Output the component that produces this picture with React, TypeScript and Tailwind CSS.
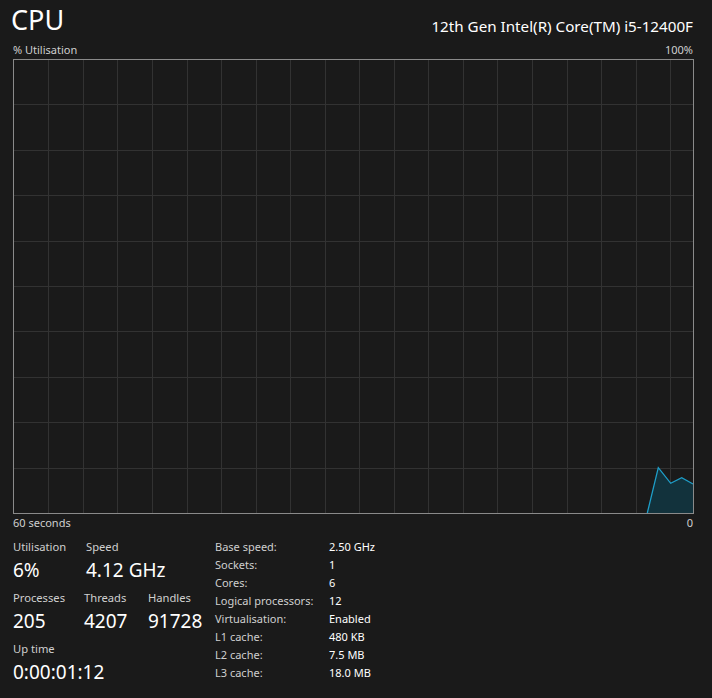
import React from "react";

const W = 680;
const H = 454;

function Graph() {
  const vLines: number[] = [];
  for (let x = 35.3; x < W; x += 34.55) vLines.push(x);
  const hLines: number[] = [];
  for (let i = 1; i < 10; i++) hLines.push((H / 10) * i);
  const pts: [number, number][] = [
    [634.3, H],
    [645.3, 408.7],
    [657.7, 424.3],
    [668.7, 418.7],
    [W, 425],
  ];
  const line = pts.map((p) => p.join(",")).join(" ");
  const area = `${line} ${W},${H}`;
  return (
    <svg width={W + 1} height={H + 1} className="block">
      {vLines.map((x, i) => (
        <line key={"v" + i} x1={x + 0.5} x2={x + 0.5} y1={0} y2={H} stroke="#323232" strokeWidth={1} shapeRendering="crispEdges" />
      ))}
      {hLines.map((y, i) => (
        <line key={"h" + i} x1={0} x2={W} y1={y + 0.5} y2={y + 0.5} stroke="#323232" strokeWidth={1} shapeRendering="crispEdges" />
      ))}
      <polygon points={area} fill="#12323c" />
      <polyline points={line} fill="none" stroke="#1e9ec8" strokeWidth={1.3} />
      <rect x={0.5} y={0.5} width={W} height={H} fill="none" stroke="#8a8a8a" strokeWidth={1} shapeRendering="crispEdges" />
    </svg>
  );
}

function Stat({ label, value, className }: { label: string; value: string; className?: string }) {
  return (
    <div className={className}>
      <div className="text-[11.2px] leading-[16px] text-[#d0d0d0]">{label}</div>
      <div className="text-[19px] leading-[28px] text-white mt-[1px]">{value}</div>
    </div>
  );
}

const table: [string, string][] = [
  ["Base speed:", "2.50 GHz"],
  ["Sockets:", "1"],
  ["Cores:", "6"],
  ["Logical processors:", "12"],
  ["Virtualisation:", "Enabled"],
  ["L1 cache:", "480 KB"],
  ["L2 cache:", "7.5 MB"],
  ["L3 cache:", "18.0 MB"],
];

export default function App() {
  return (
    <div
      className="w-[712px] h-[698px] bg-[#1a1a1a] overflow-hidden text-white"
      style={{ fontFamily: '"Noto Sans", "Open Sans", sans-serif' }}
    >
      <div className="flex justify-between items-end pl-[11px] pr-[19px] h-[38px]">
        <div className="text-[27px] leading-[36px] text-white">CPU</div>
        <div className="text-[15.2px] leading-[22px] text-white mb-[1px]">12th Gen Intel(R) Core(TM) i5-12400F</div>
      </div>
      <div className="flex justify-between pl-[13px] pr-[19px] h-[21px] pt-[2px] text-[11px] leading-[19px] text-[#cfcfcf]">
        <span>% Utilisation</span>
        <span>100%</span>
      </div>
      <div className="pl-[13px]">
        <Graph />
      </div>
      <div className="flex justify-between pl-[13px] pr-[19px] h-[20px] text-[11px] leading-[18px] text-[#cfcfcf]">
        <span>60 seconds</span>
        <span>0</span>
      </div>
      <div className="flex pl-[13px] pt-[5px]">
        <div className="w-[202px] flex flex-col gap-[6px]">
          <div className="flex">
            <Stat label="Utilisation" value="6%" className="w-[73px]" />
            <Stat label="Speed" value="4.12 GHz" />
          </div>
          <div className="flex">
            <Stat label="Processes" value="205" className="w-[71px]" />
            <Stat label="Threads" value="4207" className="w-[64px]" />
            <Stat label="Handles" value="91728" />
          </div>
          <Stat label="Up time" value="0:00:01:12" />
        </div>
        <div className="flex flex-col -mt-[1px]">
          {table.map(([k, v]) => (
            <div key={k} className="flex h-[18px] text-[11px] leading-[18px]">
              <span className="w-[114px] text-[#cfcfcf]">{k}</span>
              <span className="text-white">{v}</span>
            </div>
          ))}
        </div>
      </div>
    </div>
  );
}
